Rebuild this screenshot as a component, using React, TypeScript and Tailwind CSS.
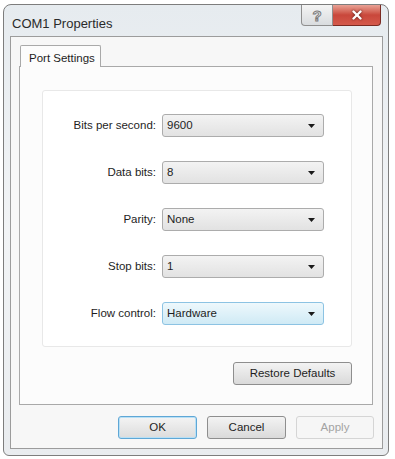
import { X } from "lucide-react";

const rows = [
  { label: "Bits per second:", value: "9600" },
  { label: "Data bits:", value: "8" },
  { label: "Parity:", value: "None" },
  { label: "Stop bits:", value: "1" },
  { label: "Flow control:", value: "Hardware", focused: true },
];

function Combo({ value, focused }: { value: string; focused?: boolean }) {
  return (
    <div
      className={
        "flex items-center justify-between w-[162px] h-[23px] rounded-[3px] border pl-[4px] pr-[8px] " +
        (focused
          ? "border-[#8cc3e3] bg-gradient-to-b from-[#eef8fc] to-[#cfeaf5]"
          : "border-[#acacac] bg-gradient-to-b from-[#f3f3f3] to-[#e2e2e2]")
      }
    >
      <span>{value}</span>
      <svg width="7" height="4" viewBox="0 0 7 4">
        <path d="M0 0H7L3.5 4Z" fill="#1a1a1a" />
      </svg>
    </div>
  );
}

function Button({
  children,
  className = "",
  disabled,
  primary,
}: {
  children: React.ReactNode;
  className?: string;
  disabled?: boolean;
  primary?: boolean;
}) {
  return (
    <div
      className={
        "flex items-center justify-center h-[23px] rounded-[3px] border " +
        (disabled
          ? "border-[#d5d5d5] bg-[#f6f6f6] text-[#a3a3a3] "
          : primary
          ? "border-[#5fa7d6] bg-gradient-to-b from-[#f4f4f4] to-[#dcdcdc] shadow-[inset_0_0_0_1px_#b9e0f5] "
          : "border-[#8e8e8e] bg-gradient-to-b from-[#f3f3f3] to-[#dadada] ") +
        className
      }
    >
      {children}
    </div>
  );
}

export default function App() {
  return (
    <div
      className="w-[395px] h-[459px] bg-white pt-[4px] pl-[3px] text-[11.5px] text-[#1e1e1e]"
      style={{ fontFamily: '"Liberation Sans", Arial, sans-serif' }}
    >
      <div className="w-[386px] h-[452px] rounded-t-[8px] rounded-b-[6px] border border-[#7d7d7d] bg-gradient-to-b from-[#e6ebef] via-[#f2f4f6] to-[#e9ecef] px-[6px]">
        {/* title bar */}
        <div className="flex h-[31px] items-start justify-between">
          <div className="pt-[9px] pl-[2px] text-[13px] text-[#2a2a2a]">COM1 Properties</div>
          <div className="flex mr-[1px]">
            <div className="flex h-[21px] w-[32px] items-center justify-center rounded-bl-[4px] border border-t-0 border-[#8f8f8f] bg-gradient-to-b from-[#f4f4f4] to-[#d9dcdf]">
              <span
                className="text-[15px] font-bold leading-none text-[#f4f4f4]"
                style={{ WebkitTextStroke: "1px #7a7a7a" }}
              >
                ?
              </span>
            </div>
            <div className="flex h-[21px] w-[48px] items-center justify-center rounded-br-[4px] border border-l-0 border-t-0 border-[#7a2a22] bg-gradient-to-b from-[#e8a195] via-[#c9473b] to-[#d4594b]">
              <X
                size={14}
                strokeWidth={4}
                color="#ffffff"
                className="drop-shadow-[0_0_1px_#4a1410]"
              />
            </div>
          </div>
        </div>

        {/* client area */}
        <div className="w-[373px] h-[413px] border border-[#9c9c9c] bg-[#f7f7f7] pl-[8px] pt-[8px]">
          <div className="flex">
            <div className="relative z-10 ml-[1px] flex h-[22px] w-[81px] items-start rounded-t-[2px] border border-b-0 border-[#a9a9a9] bg-[#fcfcfc] pl-[8px] pt-[4px]">
              Port Settings
            </div>
          </div>
          <div className="-mt-[1px] w-[354px] h-[339px] border border-[#a9a9a9] bg-[#fcfcfc] pl-[22px] pt-[23px]">
            <div className="w-[310px] h-[257px] rounded-[3px] border border-[#e8e8e8] bg-white pt-[23px] flex flex-col gap-[24px]">
              {rows.map((r) => (
                <div key={r.label} className="flex items-center h-[23px]">
                  <div className="w-[113px] text-right">{r.label}</div>
                  <div className="ml-[6px]">
                    <Combo value={r.value} focused={r.focused} />
                  </div>
                </div>
              ))}
            </div>
            <div className="flex justify-end w-[310px] mt-[15px]">
              <Button className="w-[119px]">Restore Defaults</Button>
            </div>
          </div>
          <div className="flex justify-end gap-[10px] w-[355px] mt-[11px]">
            <Button primary className="w-[79px]">OK</Button>
            <Button className="w-[79px]">Cancel</Button>
            <Button disabled className="w-[78px]">Apply</Button>
          </div>
        </div>
      </div>
    </div>
  );
}
